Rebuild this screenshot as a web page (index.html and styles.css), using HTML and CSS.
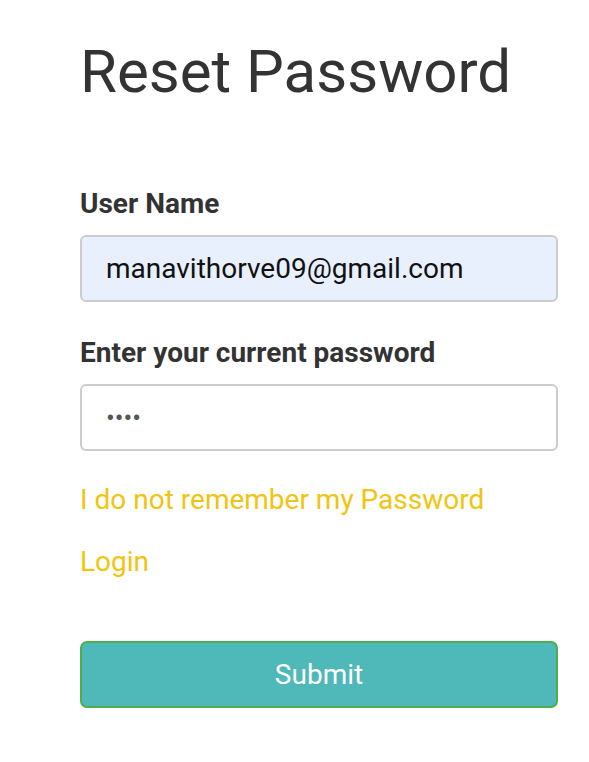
FILE: index.html
```html
<!DOCTYPE html>
<html>
<head>
<meta charset="utf-8">
<link rel="stylesheet" href="styles.css">
</head>
<body>
<div class="page">
  <h1 class="title">Reset Password</h1>
  <form class="form">
    <label class="label">User Name</label>
    <input class="field field-filled" type="text" value="manavithorve09@gmail.com">
    <label class="label label-second">Enter your current password</label>
    <input class="field field-pass" type="password" value="1234">
    <a class="link link-forgot" href="#">I do not remember my Password</a>
    <a class="link link-login" href="#">Login</a>
    <button class="submit" type="button">Submit</button>
  </form>
</div>
</body>
</html>
```
FILE: styles.css
```css
html, body {
  margin: 0;
  padding: 0;
  background: #ffffff;
}
body {
  font-family: Roboto, "Noto Sans", sans-serif;
  color: #333333;
}
.page {
  padding: 0 31px 0 80px;
}
.title {
  margin: 0;
  padding-top: 37px;
  font-size: 60px;
  font-weight: 400;
  line-height: 70px;
  color: #333333;
}
.form {
  display: flex;
  flex-direction: column;
  padding-top: 80px;
}
.label {
  font-size: 28px;
  font-weight: 700;
  line-height: 33px;
  color: #333333;
  margin-bottom: 15px;
}
.label-second {
  margin-top: 34px;
}
.field {
  box-sizing: border-box;
  height: 67px;
  width: 100%;
  border: 2px solid #cccccc;
  border-radius: 6px;
  padding: 0 24px;
  font-family: Roboto, sans-serif;
  font-size: 28px;
  color: #111111;
  background: #ffffff;
  outline: none;
  margin: 0;
}
.field-filled {
  background: #e8f0fe;
}
.field-pass {
  color: #555555;
  font-size: 26px;
}
.link {
  font-size: 28px;
  line-height: 33px;
  color: #f1c40f;
  text-decoration: none;
}
.link-forgot {
  margin-top: 32px;
}
.link-login {
  margin-top: 29px;
}
.submit {
  margin-top: 63px;
  box-sizing: border-box;
  height: 67px;
  width: 100%;
  background: #4fb8b8;
  border: 2px solid #4cae4c;
  border-radius: 7px;
  color: #ffffff;
  font-family: Roboto, sans-serif;
  font-size: 28px;
}
```
